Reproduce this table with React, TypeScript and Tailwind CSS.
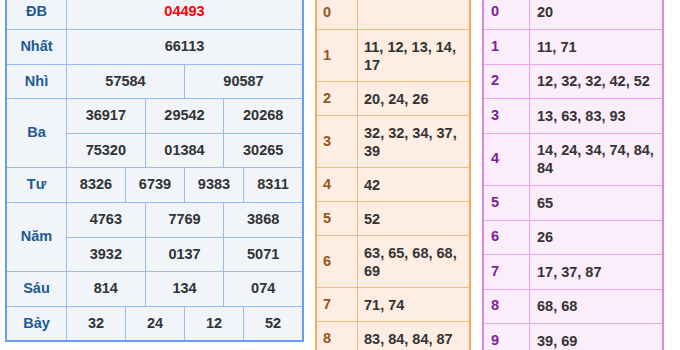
import React from "react";

type Prize = { label: string; rows: string[][]; heights: number[] };

const prizes: Prize[] = [
  { label: "ĐB", rows: [["04493"]], heights: [34] },
  { label: "Nhất", rows: [["66113"]], heights: [34] },
  { label: "Nhì", rows: [["57584", "90587"]], heights: [33] },
  { label: "Ba", rows: [["36917", "29542", "20268"], ["75320", "01384", "30265"]], heights: [34, 33] },
  { label: "Tư", rows: [["8326", "6739", "9383", "8311"]], heights: [34] },
  { label: "Năm", rows: [["4763", "7769", "3868"], ["3932", "0137", "5071"]], heights: [34, 33] },
  { label: "Sáu", rows: [["814", "134", "074"]], heights: [34] },
  { label: "Bảy", rows: [["32", "24", "12", "52"]], heights: [33] },
];

const dau: [string, string][] = [
  ["0", ""],
  ["1", "11, 12, 13, 14, 17"],
  ["2", "20, 24, 26"],
  ["3", "32, 32, 34, 37, 39"],
  ["4", "42"],
  ["5", "52"],
  ["6", "63, 65, 68, 68, 69"],
  ["7", "71, 74"],
  ["8", "83, 84, 84, 87"],
];

const duoi: [string, string][] = [
  ["0", "20"],
  ["1", "11, 71"],
  ["2", "12, 32, 32, 42, 52"],
  ["3", "13, 63, 83, 93"],
  ["4", "14, 24, 34, 74, 84, 84"],
  ["5", "65"],
  ["6", "26"],
  ["7", "17, 37, 87"],
  ["8", "68, 68"],
  ["9", "39, 69"],
];

export default function App() {
  return (
    <div
      className="w-[680px] h-[350px] overflow-hidden bg-white flex items-start"
      style={{ fontFamily: '"Liberation Sans", Arial, sans-serif' }}
    >
      <div className="flex items-start gap-[11px] ml-[5px] -mt-[7px] text-[14.5px] font-bold">
        {/* Results table */}
        <div className="w-[299px] border-2 border-[#6a9eec] bg-[#98bdf4] flex flex-col gap-px">
          {prizes.map((p) => (
            <div key={p.label} className="flex gap-px">
              <div className="w-[59px] shrink-0 bg-[#f1f4f9] flex items-center justify-center text-[#1d5a97]">
                {p.label}
              </div>
              <div className="flex-1 flex flex-col gap-px">
                {p.rows.map((r, i) => (
                  <div key={i} className="flex gap-px" style={{ height: p.heights[i] }}>
                    {r.map((v, j) => (
                      <div
                        key={j}
                        className={
                          "flex-1 basis-0 bg-[#f1f4f9] flex items-center justify-center " +
                          (p.label === "ĐB" ? "text-[#ff0000]" : "text-[#333333]")
                        }
                      >
                        {v}
                      </div>
                    ))}
                  </div>
                ))}
              </div>
            </div>
          ))}
        </div>

        {/* Đầu table */}
        <div className="w-[156px] border-2 border-[#f5a860] bg-[#f8b97e] flex flex-col gap-px mt-[1px]">
          {dau.map(([k, v]) => (
            <div key={k} className="flex gap-px">
              <div className="w-[40px] shrink-0 bg-[#fdede2] flex items-center pl-[6px] text-[#94561c]">
                {k}
              </div>
              <div className="flex-1 bg-[#fdede2] min-h-[33px] py-[7.5px] pl-[6px] pr-[4px] leading-[18px] text-[#333333] flex items-center">
                <span>{v}</span>
              </div>
            </div>
          ))}
        </div>

        {/* Đuôi table */}
        <div className="w-[182px] border-2 border-[#e183e3] bg-[#eda2ee] flex flex-col gap-px mt-[0.5px]">
          {duoi.map(([k, v]) => (
            <div key={k} className="flex gap-px">
              <div className="w-[45px] shrink-0 bg-[#fcedfa] flex items-center pl-[7px] text-[#7d1f98]">
                {k}
              </div>
              <div className="flex-1 bg-[#fcedfa] min-h-[33.5px] py-[7.75px] pl-[7px] pr-[4px] leading-[18px] text-[#333333] flex items-center">
                <span>{v}</span>
              </div>
            </div>
          ))}
        </div>
      </div>
    </div>
  );
}
